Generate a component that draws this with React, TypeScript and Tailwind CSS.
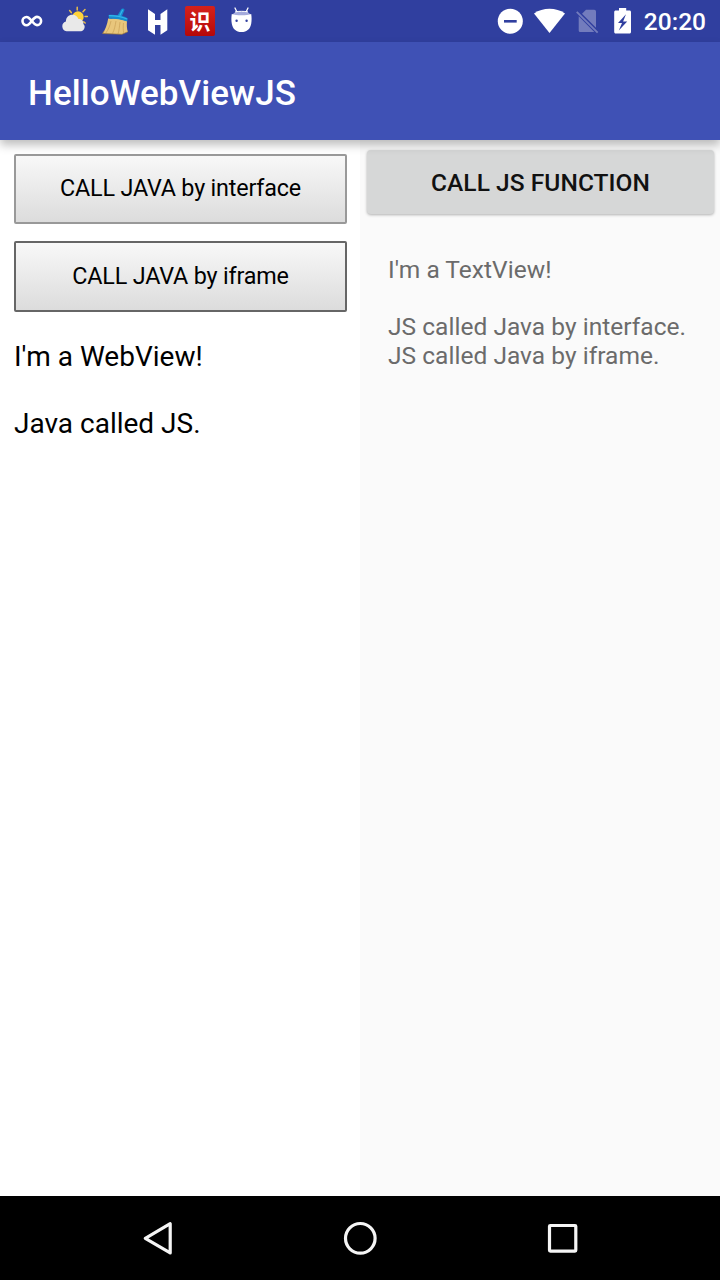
import type { ReactNode } from "react";

function Cell({ children }: { children: ReactNode }) {
  return <div className="flex h-[42px] w-[42px] shrink-0 items-center justify-center">{children}</div>;
}

function StatusIcons() {
  return (
    <div className="flex pl-[11px]">
      <Cell>
        <svg width="42" height="42" viewBox="0 0 42 42" fill="none" stroke="#fff" strokeWidth="2.6">
          <path d="M20.8 21C18.700 18.400 17.500 17 15.600 17a4.100 4.100 0 0 0 0 8.200c2 0 3.400-1.700 5.200-4.200 1.800-2.500 3.200-4.100 5.200-4.100a4.100 4.100 0 0 1 0 8.200c-1.900 0-3.100-1.500-5.200-4.100Z" />
        </svg>
      </Cell>
      <Cell>
        <svg width="42" height="42" viewBox="0 0 42 42">
          <g stroke="#e7bd4b" strokeWidth="1.500" strokeLinecap="round">
            <path d="M24.200 7.200v2.800M16.600 10.600l1.700 2M32 9.500l-2 2.200M32 16.500h2.300M30.700 21.800l1.500 1.200" />
          </g>
          <circle cx="25" cy="17" r="5.700" fill="#ffd33b" />
          <path d="M13.500 31.300a5.100 5.100 0 0 1-.6-9.900c.1-4.200 3.100-6.800 6.700-6.600 2.800.1 4.900 1.800 5.800 4.300 3.300 0 5.200 2 5 4.900 1.700 1.400 1.500 3.500.7 5-.8 1.600-2.200 2.300-4.100 2.300Z" fill="#e9e9e9" />
        </svg>
      </Cell>
      <Cell>
        <svg width="42" height="42" viewBox="0 0 42 42">
          <path d="M13.200 18.500c3 .4 7.300-.2 10.500.3l8.300 2.200c-.4 4.500-.2 8 .9 10.700L27 34.300l-19.400-.8c2.600-3.700 4.600-8.500 5.600-15Z" fill="#e8c67c" />
          <path d="M16 21c-1 5-3 9-5.200 12M21 21c-.8 5-1.700 9-3.500 12.500M25 22c-.6 5-.8 8-2 12M28.500 23c-.5 4-.3 7 .2 10" stroke="#c49b50" strokeWidth=".6" fill="none" />
          <path d="m9 31-1.400 2.500 19.400.8 5.900-2.600" fill="none" stroke="#9e7938" strokeWidth=".7" />
          <path d="M13.500 15c3-.6 6.200-.4 9.100.3l3.700-6.200c.7-1.300 3.700-.5 3.200 1l-2.500 5.800c2.500.8 4.500 1.300 5.800 2.600l-.6 3.100c-5-2-12-3-18.200-3.100Z" fill="#168bd0" />
          <path d="M14 15.700c6 0 12 .8 18 3.300M27.700 9.800l-3 6" stroke="#36b7eb" strokeWidth="1.200" fill="none" />
        </svg>
      </Cell>
      <Cell>
        <svg width="42" height="42" viewBox="0 0 42 42" fill="#fff">
          <path d="m11 9.300 7 4.600V20h5.500v-6.100l6.800-4.600v21l-6.800 4.500v-9.700H18v9.700l-7-4.500Z" />
        </svg>
      </Cell>
      <Cell>
        <div className="flex h-[30px] w-[30px] items-center justify-center rounded-[2px] bg-linear-to-b from-[#d5211c] to-[#b50709] pb-[2px] font-['Noto_Sans_CJK_SC',sans-serif] text-[21px] leading-[27px] font-bold text-white">识</div>
      </Cell>
      <Cell>
        <svg width="42" height="42" viewBox="0 0 42 42">
          <path d="m14 8 1.700 3.500M27 8l-1.700 3.500" stroke="#fff" strokeWidth="1.300" strokeLinecap="round" />
          <path d="M11.500 16c.2-3.500 4-4.700 9-4.700s8.800 1.200 9 4.700Z" fill="#a5abdc" />
          <path d="M14 11.900c4-.8 9-.8 13 0" stroke="#fff" fill="none" />
          <path d="M10.800 14c4 1.800 15.400 1.800 19.400 0 .5 3 .6 6.500 0 9.700-.9 5.200-4.300 8.300-9.700 8.300s-8.800-3.100-9.700-8.300c-.6-3.200-.5-6.700 0-9.700Z" fill="#fff" />
          <circle cx="15.600" cy="20.700" r="1.200" fill="#303f9f" />
          <circle cx="25.600" cy="20.700" r="1.200" fill="#303f9f" />
        </svg>
      </Cell>
    </div>
  );
}

function SystemIcons() {
  return (
    <div className="flex items-center pr-[14px]">
      <svg width="146" height="42" viewBox="496 0 146 42">
        <circle cx="510.300" cy="21.200" r="12.500" fill="#fff" />
        <path d="M504 20h12.700v2.600H504Z" fill="#303f9f" />
        <path d="M549.500 33 534 13.500c9-6.200 22-6.200 31 0Z" fill="#fff" />
        <path d="M586 9.800h8.300a1.700 1.700 0 0 1 1.700 1.700v16.200L582 13.700ZM578.700 16.200 594.300 32H580.200a1.500 1.500 0 0 1-1.500-1.500ZM577.400 11.200 598.300 32l-1.300 1.300-20.900-20.800Z" fill="#737cbd" />
        <path d="M619 8h7.200v2.600h3.300c.9 0 1.500.6 1.500 1.500v19.800c0 .9-.6 1.500-1.500 1.500h-13.800c-.9 0-1.500-.6-1.500-1.500V12.100c0-.9.600-1.500 1.500-1.500h3.300Z" fill="#fff" />
        <path d="m626 14.300-8 8.700h4l-3.200 7.600 8.400-9.100h-4.100Z" fill="#303f9f" />
      </svg>
      <span className="w-[64px] pt-[2px] text-right text-[24.500px] leading-[28px] font-medium whitespace-nowrap text-white">20:20</span>
    </div>
  );
}

export default function App() {
  return (
    <div className="flex h-[1280px] w-[720px] flex-col overflow-hidden bg-white font-[Roboto,sans-serif]">
      <div className="flex h-[42px] shrink-0 items-center justify-between bg-[#303f9f]">
        <StatusIcons />
        <SystemIcons />
      </div>
      <header className="relative z-10 flex h-[98px] shrink-0 items-center bg-[#3f51b5] pt-[5px] pl-[28px] shadow-[0_5px_9px_rgba(0,0,0,0.26)]">
        <h1 className="text-[35px] leading-[42px] font-medium tracking-[0.08px] whitespace-nowrap text-white">HelloWebViewJS</h1>
      </header>
      <main className="flex min-h-0 flex-1">
        <section className="flex w-[360px] flex-col bg-white px-[14px] pt-[14px] text-black">
          <button className="h-[70px] w-[333px] rounded-[2px] border-2 border-[#999] bg-linear-to-b from-[#f8f8f8] to-[#dcdcdc] pb-[2px] text-[23.330px] leading-[28px] tracking-[-0.19px]">CALL JAVA by interface</button>
          <button className="mt-[17px] h-[71px] w-[333px] rounded-[2px] border-2 border-[#666] bg-linear-to-b from-[#f8f8f8] to-[#dcdcdc] pb-[2px] text-[23.330px] leading-[28px] tracking-[-0.16px]">CALL JAVA by iframe</button>
          <p className="mt-[28px] text-[28px] leading-[34px] whitespace-nowrap">I'm a WebView!</p>
          <p className="mt-[33px] text-[28px] leading-[34px] whitespace-nowrap">Java called JS.</p>
        </section>
        <section className="flex w-[360px] flex-col bg-[#fafafa] px-[7px] pt-[10px]">
          <button className="h-[64px] w-[347px] rounded-[4px] bg-[#d6d7d7] pt-[2px] text-[24.500px] leading-[28px] font-medium tracking-[0.06px] text-[#111] shadow-[0_1px_3px_rgba(0,0,0,0.3)]">CALL JS FUNCTION</button>
          <div className="mt-[42px] pl-[21px] text-[24.500px] leading-[28.500px] tracking-[0.03px] whitespace-nowrap text-[#6b6b6b]">
            <p>I'm a TextView!</p>
            <p className="mt-[28.500px]">JS called Java by interface.</p>
            <p>JS called Java by iframe.</p>
          </div>
        </section>
      </main>
      <nav className="flex h-[84px] shrink-0 justify-center bg-black">
        <svg width="480" height="84" viewBox="120 1196 480 84" fill="none" stroke="#f5f5f5" strokeWidth="3.200" strokeLinejoin="round">
          <path d="M170.200 1223.700v29.200l-24.900-14.600Z" />
          <circle cx="360.300" cy="1238.300" r="14.800" />
          <rect x="549.500" y="1225.500" width="26.300" height="25.600" rx=".8" />
        </svg>
      </nav>
    </div>
  );
}
